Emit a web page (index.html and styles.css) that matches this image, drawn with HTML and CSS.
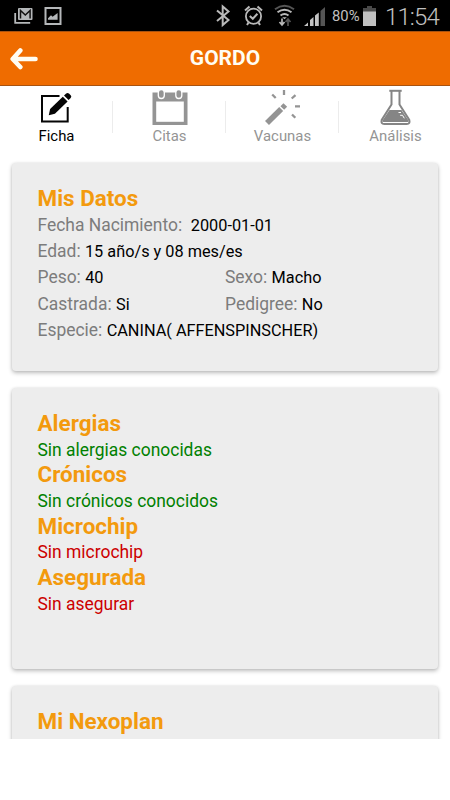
FILE: index.html
```html
<!DOCTYPE html>
<html lang="es">
<head>
<meta charset="utf-8">
<meta name="viewport" content="width=device-width, initial-scale=1">
<title>Gordo</title>
<link rel="stylesheet" href="styles.css">
</head>
<body>
<div class="statusbar">
  <svg class="notif" width="48" height="31" viewBox="14 0 48 31" fill="none">
    <path d="M15.2 13v9.8h15" stroke="#b5b8ba" stroke-width="1.8"/>
    <rect x="18" y="8" width="14.500" height="12" rx="1" fill="#b5b8ba"/>
    <path d="M20.500 18.500v-8l4.800 4.500 4.800-4.500v8" stroke="#111" stroke-width="1.500"/>
    <path d="M45.500 8h15v16h-15z" stroke="#b5b8ba" stroke-width="2"/>
    <path d="M48 19.800v-1.500l3-3 1.600 1.400 5-3.700v6.800z" fill="#b5b8ba"/>
  </svg>
  <svg class="radios" width="118" height="31" viewBox="210 0 118 31" fill="none">
    <path d="M217 10.500l11.500 9.500-5.800 5V6.500l5.800 5L217 21" stroke="#b9b9b9" stroke-width="2"/>
    <circle cx="253.500" cy="16.200" r="7.600" stroke="#b9b9b9" stroke-width="1.800"/>
    <path d="M249.800 16l3 2.800 4.600-5M245 10.500l4.500-4M262 10.500l-4.500-4M248.500 22.500l-1.500 2.500M258.500 22.500l1.500 2.500" stroke="#b9b9b9" stroke-width="2"/>
    <path d="M275 9.300q9.500-7 19 0" stroke="#555" stroke-width="2"/>
    <path d="M277.500 12.300q7-5 14 0M280.500 15.500q4-3 8 0" stroke="#b9b9b9" stroke-width="2"/>
    <path d="M282.200 17.300h4.600l-2.300 2z" fill="#b9b9b9"/>
    <path d="M282 18.500v6M279.500 22l2.500 3 2.500-3" stroke="#b9b9b9" stroke-width="1.700"/>
    <path d="M288 26v-6M285.500 22l2.500-3 2.500 3" stroke="#555" stroke-width="1.700"/>
    <path d="M304 26l4-3.500V26zM310 26v-6l3.500-3v9zM315 26V15.500l3.800-3V26z" fill="#c4c4c4"/>
    <path d="M320.500 26V11l4.500-4v19z" fill="#555"/>
  </svg>
  <span class="percent">80%</span>
  <svg class="battery" width="13" height="31" viewBox="363 0 13 31">
    <path d="M367 6h5v2h4v4h-13V8h4z" fill="#4a4a4a"/>
    <path d="M363 11.500h13V26h-13z" fill="#c0c0c0"/>
  </svg>
  <span class="clock">11:54</span>
</div>
<header class="topbar">
  <svg class="back" width="28" height="22" viewBox="0 0 28 22" fill="none" stroke="#fffdf3" stroke-width="4.600" stroke-linecap="round" stroke-linejoin="round"><path d="M10.300 2.500L2.700 11l7.600 8M3.500 11h22"/></svg>
  <h1>GORDO</h1>
</header>
<nav class="tabs">
  <a class="tab active">
    <svg width="36" height="36" viewBox="39 89 36 36">
      <path d="M59.500 96H42v25.500h25.700V107" fill="none" stroke="#050505" stroke-width="2"/>
      <path d="M48.800 115.300l1.300-6.300 12.700-12.300 4.800 4.700-12.700 12.300z" fill="#050505"/>
      <path d="M64 95.500l2.200-2.100q1.500-1 3 .3l1.500 1.500q1.200 1.300 0 2.700l-2.100 2.200z" fill="#050505"/>
    </svg>
    <span>Ficha</span>
  </a>
  <a class="tab">
    <svg width="36" height="36" viewBox="152 89 36 36">
      <path d="M152.500 92.500h35V125h-35z" fill="#949494"/>
      <path d="M156.200 101.500h27.600v20.300h-27.600z" fill="#fff"/>
      <rect x="158.300" y="89.500" width="6" height="9" rx="3" fill="#949494" stroke="#fff" stroke-width="1.300"/>
      <rect x="175.800" y="89.500" width="6" height="9" rx="3" fill="#949494" stroke="#fff" stroke-width="1.300"/>
    </svg>
    <span>Citas</span>
  </a>
  <a class="tab">
    <svg width="36" height="36" viewBox="265 89 36 36" fill="none" stroke="#949494">
      <path d="M267 123l14.200-14" stroke-width="5.600"/>
      <path d="M282.300 108l3-3" stroke-width="5.200"/>
      <path d="M284 90v5M272.200 94.500l3.500 3.500M295.500 95.200l-3.800 3.300M295 106.300h5M292 114.500l3.300 3.300" stroke-width="2.300"/>
    </svg>
    <span>Vacunas</span>
  </a>
  <a class="tab">
    <svg width="36" height="36" viewBox="378 89 36 36" fill="none" stroke="#858585">
      <path d="M389.300 90.800h12.400" stroke-width="2"/>
      <path d="M391.500 91v13.500l-9.800 15.500q-1 4 2.500 4h22.600q3.500 0 2.500-4l-9.800-15.500V91" stroke-width="2"/>
      <path d="M389.500 110h12l7 10.500q.5 1.500-1 1.500h-24q-1.500 0-1-1.500z" fill="#858585" stroke="none"/>
      <path d="M398.500 112.500h2.500M400.200 115.300h2.300l1.800 3" stroke="#fff" stroke-width="1"/>
    </svg>
    <span>Análisis</span>
  </a>
</nav>
<main class="cards">
  <section class="card datos">
    <h2>Mis Datos</h2>
    <p><span class="label">Fecha Nacimiento:</span>&nbsp; <span class="value">2000-01-01</span></p>
    <p><span class="label">Edad:</span> <span class="value">15 año/s y 08 mes/es</span></p>
    <div class="pair">
      <p><span class="label">Peso:</span> <span class="value">40</span></p>
      <p><span class="label">Sexo:</span> <span class="value">Macho</span></p>
    </div>
    <div class="pair">
      <p><span class="label">Castrada:</span> <span class="value">Si</span></p>
      <p><span class="label">Pedigree:</span> <span class="value">No</span></p>
    </div>
    <p><span class="label">Especie:</span> <span class="value">CANINA( AFFENSPINSCHER)</span></p>
  </section>
  <section class="card salud">
    <h2>Alergias</h2>
    <p class="ok">Sin alergias conocidas</p>
    <h2>Crónicos</h2>
    <p class="ok">Sin crónicos conocidos</p>
    <h2>Microchip</h2>
    <p class="bad">Sin microchip</p>
    <h2>Asegurada</h2>
    <p class="bad">Sin asegurar</p>
  </section>
  <section class="card plan">
    <h2>Mi Nexoplan</h2>
  </section>
</main>
</body>
</html>
```
FILE: styles.css
```css
* { box-sizing: border-box; }
body {
  margin: 0;
  background: #fff;
  font-family: Roboto, "Noto Sans", sans-serif;
  color: #000;
}
h1, h2, p { margin: 0; }
svg { display: block; flex: none; }

.statusbar {
  display: flex;
  align-items: center;
  height: 31px;
  padding-left: 14px;
  background: #000;
  color: #c0c0c0;
}
.radios { margin-left: 148px; }
.percent {
  width: 31px;
  margin-left: 4px;
  padding-top: 2px;
  font-size: 14.800px;
  line-height: 29px;
}
.clock {
  margin-left: 9px;
  padding-top: 3px;
  font-size: 24px;
  font-weight: 300;
  line-height: 28px;
  letter-spacing: -.9px;
}

.topbar {
  display: grid;
  grid-template-columns: 38px 1fr 38px;
  align-items: center;
  height: 55px;
  background: #ef6c00;
  border-top: 1px solid #a85310;
  border-bottom: 1px solid #a85310;
}
.back { margin-left: 10px; }
.topbar h1 {
  padding-bottom: 2px;
  text-align: center;
  color: #fffdf3;
  font-size: 21px;
  font-weight: 700;
  line-height: 28px;
}

.tabs {
  display: grid;
  grid-template-columns: repeat(4, 113px);
  height: 64px;
  padding-top: 3px;
  overflow: hidden;
}
.tab {
  display: flex;
  flex-direction: column;
  align-items: center;
  color: #949494;
  font-size: 14.900px;
  line-height: 20px;
  height: 50px;
  background: linear-gradient(#ececec, #ececec) right 12px / 1px 32px no-repeat;
}
.tab:last-child { background: none; }
.tab span { margin-top: 1px; }
.tab.active { color: #000; }

.cards {
  height: 589px;
  padding: 12.500px 12px 12px;
  display: flex;
  flex-direction: column;
  gap: 17px;
  overflow: hidden;
}
.card {
  flex: none;
  padding: 22.500px 25.500px;
  border-radius: 4px;
  background: #ededed;
  box-shadow: 0 2px 4px rgba(0, 0, 0, .26), 0 0 3px rgba(0, 0, 0, .08);
}
.datos { height: 208px; }
.salud { height: 281px; }
.plan { height: 120px; }
.card h2 {
  margin-bottom: 1px;
  color: #f39a0e;
  font-size: 22.450px;
  font-weight: 700;
  line-height: 26px;
}
.card p {
  font-size: 17.450px;
  line-height: 26.200px;
  white-space: nowrap;
}
.datos p { height: 26.200px; }
.card.salud h2 { margin-bottom: 3.500px; }
.salud p { line-height: 21.850px; }
.label { color: #7c7c7c; }
.value {
  color: #000;
  font-size: 16.300px;
}
.pair {
  display: grid;
  grid-template-columns: 1fr 1fr;
}
.ok { color: #008000; }
.bad { color: #cc0000; }
```
